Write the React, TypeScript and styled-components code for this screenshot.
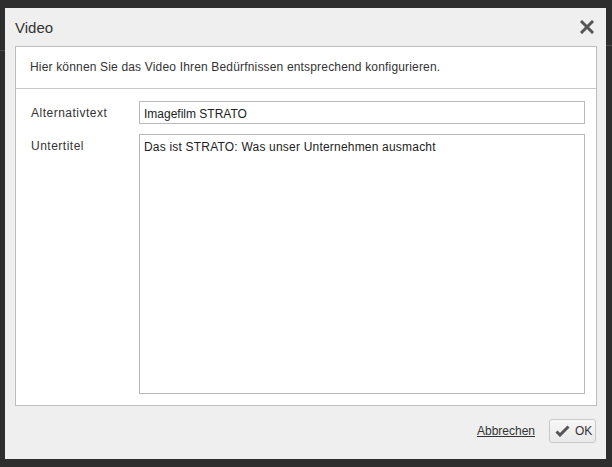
import React from "react";
import styled, { createGlobalStyle } from "styled-components";

const Global = createGlobalStyle`
  html, body { margin: 0; padding: 0; }
  body {
    background: #2e2e2e;
    font-family: "Liberation Sans", Arial, sans-serif;
    width: 612px;
    height: 467px;
    overflow: hidden;
  }
`;

const Page = styled.div`
  position: relative;
  width: 612px;
  height: 467px;
  padding: 8px 0 0 5px;
  box-sizing: border-box;
`;

const BackLine = styled.div<{ $top: number; $left: number; $width: number }>`
  position: absolute;
  top: ${(p) => p.$top}px;
  left: ${(p) => p.$left}px;
  width: ${(p) => p.$width}px;
  height: 1px;
  background: #4a4a4a;
`;

const Dialog = styled.div`
  position: relative;
  width: 601px;
  height: 451px;
  background: #efefef;
  display: flex;
  flex-direction: column;
  box-sizing: border-box;
`;

const Header = styled.div`
  height: 38px;
  display: flex;
  align-items: center;
  justify-content: space-between;
  padding: 0 12px 0 10px;
  box-sizing: border-box;
`;

const Title = styled.div`
  font-size: 15px;
  color: #333;
`;

const Close = styled.button`
  border: 0;
  background: none;
  padding: 0;
  width: 14px;
  height: 14px;
  display: flex;
  cursor: pointer;
`;

const Panel = styled.div`
  margin: 0 9px 0 10px;
  height: 360px;
  background: #fff;
  border: 1px solid #bdbdbd;
  box-sizing: border-box;
  display: flex;
  flex-direction: column;
`;

const Intro = styled.div`
  height: 42px;
  border-bottom: 1px solid #c8c8c8;
  box-sizing: border-box;
  display: flex;
  align-items: center;
  padding: 0 0 1px 14px;
  font-size: 12px;
  letter-spacing: 0.17px;
  color: #333;
`;

const Form = styled.div`
  flex: 1;
  display: grid;
  grid-template-columns: 108px 1fr;
  grid-template-rows: 23px 1fr;
  row-gap: 10px;
  padding: 12px 11px 11px 15px;
  box-sizing: border-box;
`;

const Label = styled.label`
  font-size: 12px;
  letter-spacing: 0.5px;
  color: #333;
  padding-top: 5px;
`;

const Input = styled.div`
  border: 1px solid #b9b9b9;
  box-sizing: border-box;
  font-size: 12px;
  color: #222;
  padding: 5px 4px 3px;
  line-height: 14px;
`;

const TextArea = styled(Input)`
  letter-spacing: 0.2px;
`;

const Footer = styled.div`
  flex: 1;
  display: flex;
  align-items: center;
  justify-content: flex-end;
  padding: 0 10px 3px 0;
  gap: 14px;
`;

const Link = styled.a`
  font-size: 12px;
  color: #333;
  text-decoration: underline;
  cursor: pointer;
`;

const Button = styled.button`
  height: 24px;
  width: 47px;
  border: 1px solid #c9c9c9;
  border-radius: 3px;
  background: linear-gradient(#f7f7f7, #e9e9e9);
  display: flex;
  align-items: center;
  gap: 5px;
  padding: 0 0 0 5px;
  box-sizing: border-box;
  font-family: "Liberation Sans", Arial, sans-serif;
  font-size: 12px;
  color: #333;
`;

export default function App() {
  return (
    <>
      <Global />
      <Page>
        <BackLine $top={50} $left={0} $width={5} />
        <BackLine $top={45} $left={606} $width={6} />
        <Dialog>
          <Header>
            <Title>Video</Title>
            <Close aria-label="Schließen">
              <svg width="14" height="14" viewBox="0 0 14 14">
                <path d="M2 2 L12 12 M12 2 L2 12" stroke="#555" strokeWidth="3" strokeLinecap="square" />
              </svg>
            </Close>
          </Header>
          <Panel>
            <Intro>Hier können Sie das Video Ihren Bedürfnissen entsprechend konfigurieren.</Intro>
            <Form>
              <Label>Alternativtext</Label>
              <Input>Imagefilm STRATO</Input>
              <Label>Untertitel</Label>
              <TextArea>Das ist STRATO: Was unser Unternehmen ausmacht</TextArea>
            </Form>
          </Panel>
          <Footer>
            <Link>Abbrechen</Link>
            <Button>
              <svg width="15" height="12" viewBox="0 0 15 12">
                <path d="M1.5 6.5 L5 10 L13.5 1.5" stroke="#555" strokeWidth="3" fill="none" strokeLinejoin="miter" />
              </svg>
              OK
            </Button>
          </Footer>
        </Dialog>
      </Page>
    </>
  );
}
